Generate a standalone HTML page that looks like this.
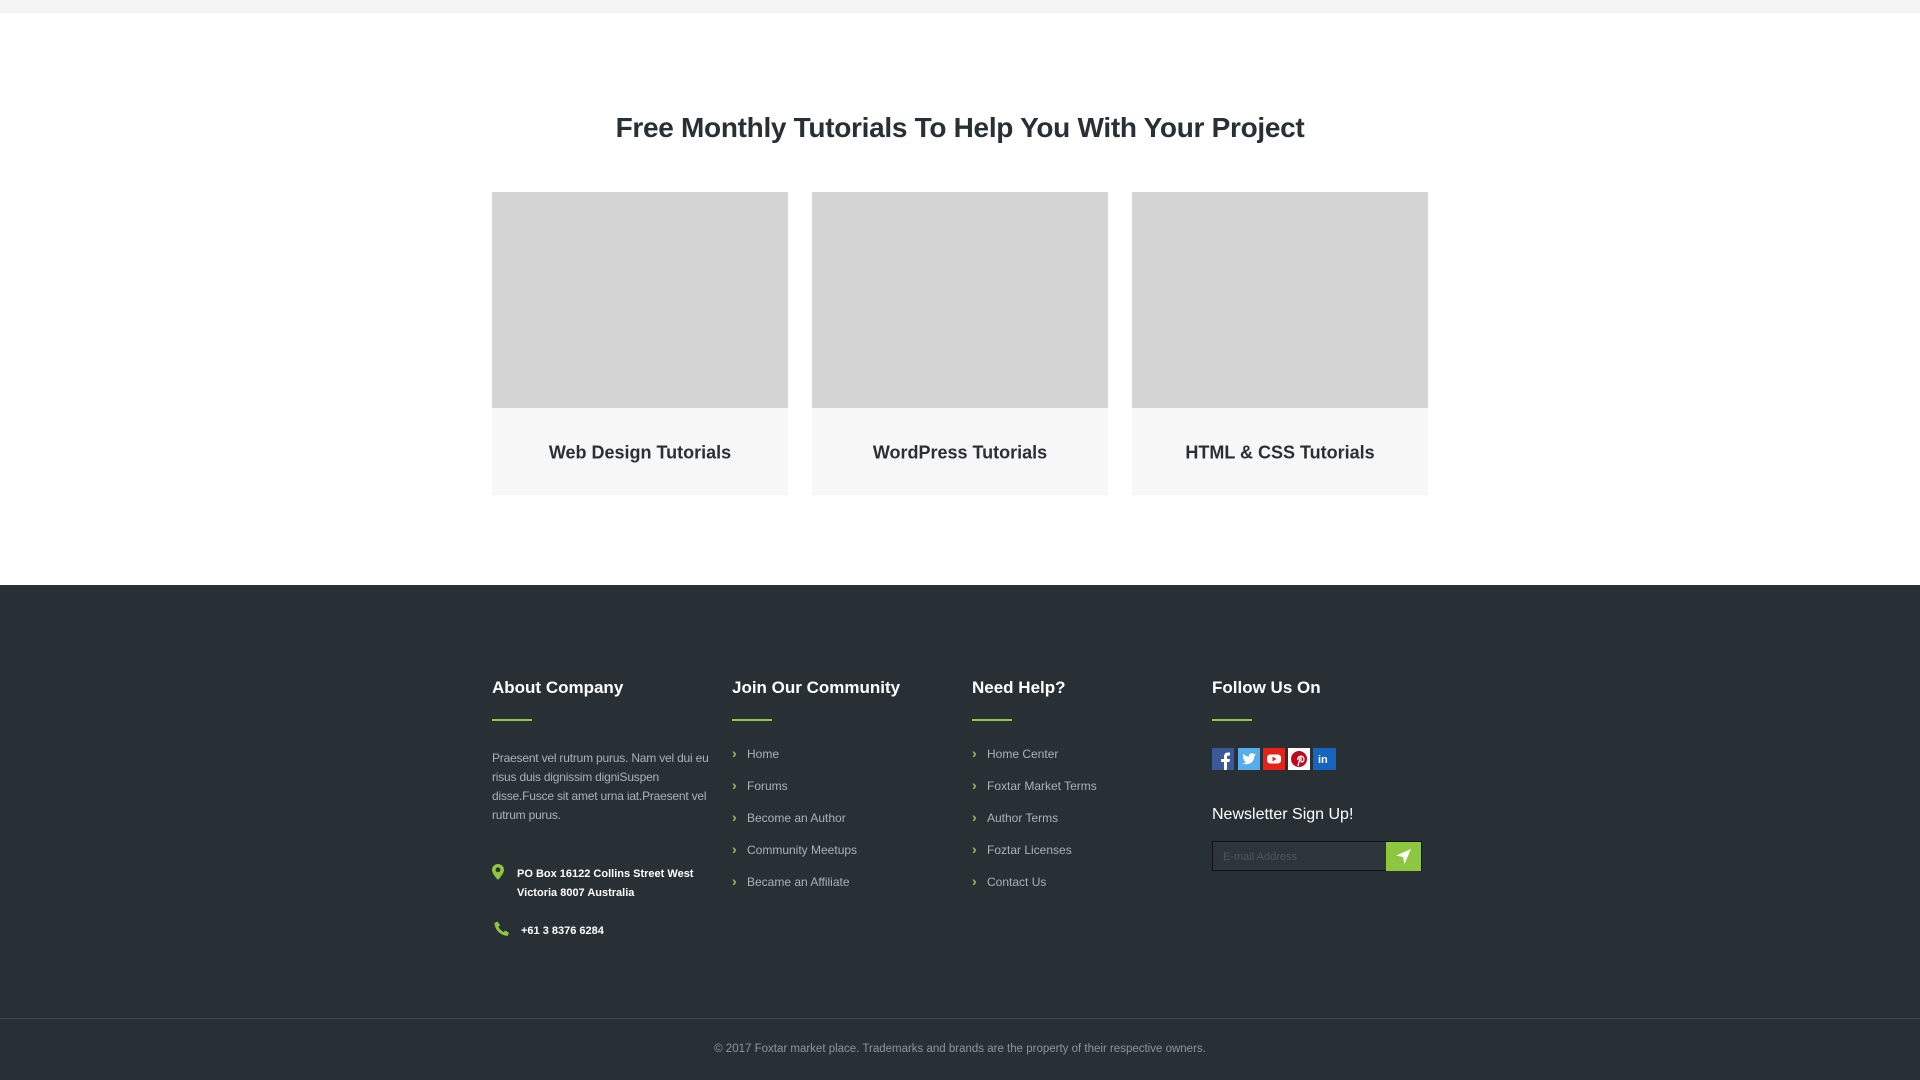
<!DOCTYPE html>
<html><head><meta charset="utf-8">
<style>
*{margin:0;padding:0;box-sizing:border-box}
body{width:1920px;height:1080px;background:#fff;font-family:"Liberation Sans",sans-serif;position:relative;overflow:hidden}
.abs{position:absolute}
.topbar{left:0;top:0;width:1920px;height:13px;background:#f4f5f4}
h1{position:absolute;left:0;width:1920px;top:112px;text-align:center;font-size:28px;font-weight:bold;color:#283035;letter-spacing:-0.3px}
.card{position:absolute;top:192px;width:296px;height:303px;background:#f7f7f7}
.card .img{height:216px;background:#d4d4d4}
.card .t{position:absolute;top:261px;left:0;width:100%;text-align:center;font-size:18px;font-weight:bold;color:#283035;transform:translateY(-50%)}
.footer{left:0;top:585px;width:1920px;height:495px;background:#283035}
.divider{left:0;top:1018px;width:1920px;height:1px;background:#3d474d}
.copy{left:0;width:1920px;top:1047px;text-align:center;font-size:11.5px;color:#8a959b}
.fh{position:absolute;top:678px;font-size:17px;font-weight:bold;color:#fff}
.gl{position:absolute;top:719px;width:40px;height:2px;background:#8dc63f}
.links{position:absolute;top:745px;list-style:none}
.links li{height:32px;font-size:12px;color:#a9b2b7;line-height:16px}
.links li:before{content:"›";color:#8dc63f;font-weight:bold;display:inline-block;width:15px;font-size:14px}
.para{left:492px;top:749px;width:218px;font-size:12px;letter-spacing:-0.2px;line-height:19px;color:#a9b2b7}
.addr{font-size:11px;font-weight:bold;color:#fff;line-height:19px}
.soc{position:absolute;top:748px;width:22px;height:22px}
</style></head><body>
<div class="abs topbar"></div>
<h1>Free Monthly Tutorials To Help You With Your Project</h1>
<div class="card" style="left:492px"><div class="img"></div><div class="t">Web Design Tutorials</div></div>
<div class="card" style="left:812px"><div class="img"></div><div class="t">WordPress Tutorials</div></div>
<div class="card" style="left:1132px"><div class="img"></div><div class="t">HTML &amp; CSS Tutorials</div></div>

<div class="abs footer"></div>
<div class="fh" style="left:492px">About Company</div>
<div class="fh" style="left:732px">Join Our Community</div>
<div class="fh" style="left:972px">Need Help?</div>
<div class="fh" style="left:1212px">Follow Us On</div>
<div class="gl" style="left:492px"></div>
<div class="gl" style="left:732px"></div>
<div class="gl" style="left:972px"></div>
<div class="gl" style="left:1212px"></div>

<div class="abs para">Praesent vel rutrum purus. Nam vel dui eu risus duis dignissim digniSuspen disse.Fusce sit amet urna iat.Praesent vel rutrum purus.</div>
<svg class="abs" style="left:492px;top:864px" width="12" height="16" viewBox="0 0 12 16"><path d="M6 0C2.7 0 0 2.6 0 5.8 0 10 6 16 6 16s6-6 6-10.2C12 2.6 9.300 0 6 0zm0 8.200a2.400 2.400 0 110-4.800 2.400 2.400 0 010 4.800z" fill="#8dc63f"/></svg>
<div class="abs addr" style="left:517px;top:865px">PO Box 16122 Collins Street West<br>Victoria 8007 Australia</div>
<svg class="abs" style="left:494px;top:921px" width="16" height="16" viewBox="0 0 16 16"><path d="M3.5 0.5l2.5 3.5-1.5 2c1 2 3 4 5 5l2-1.5 3.5 2.5-1.5 3C6 14 1 9 0.5 2z" fill="#8dc63f"/></svg>
<div class="abs addr" style="left:521px;top:922px">+61 3 8376 6284</div>

<ul class="links" style="left:732px"><li>Home</li><li>Forums</li><li>Become an Author</li><li>Community Meetups</li><li>Became an Affiliate</li></ul>
<ul class="links" style="left:972px"><li>Home Center</li><li>Foxtar Market Terms</li><li>Author Terms</li><li>Foztar Licenses</li><li>Contact Us</li></ul>

<svg class="soc" style="left:1212px" viewBox="0 0 22 22"><rect width="22" height="22" fill="#3b5998"/><path d="M12 22v-8h-3v-3h3V8.5c0-2.5 1.5-4 4-4h2v3h-1.5c-1 0-1.5.5-1.5 1.5V11h3l-.5 3H15v8z" fill="#fff"/></svg>
<svg class="soc" style="left:1238px" viewBox="0 0 22 22"><rect width="22" height="22" fill="#55acee"/><path d="M18 6.5c-.5.2-1 .4-1.6.4.6-.3 1-.9 1.2-1.5-.5.3-1.1.6-1.8.7a2.8 2.8 0 00-4.8 2.6C8.7 8.6 6.6 7.5 5.2 5.8c-.8 1.3-.3 2.9.9 3.7-.5 0-.9-.1-1.3-.3 0 1.4 1 2.6 2.3 2.8-.4.1-.9.1-1.3 0 .4 1.1 1.4 1.9 2.6 1.9A5.7 5.7 0 014 15c1.3.8 2.7 1.3 4.3 1.3 5.2 0 8.1-4.4 8-8.3.6-.4 1.1-.9 1.5-1.5z" fill="#fff"/></svg>
<svg class="soc" style="left:1263px" viewBox="0 0 22 22"><rect width="22" height="22" fill="#e62117"/><rect x="4" y="6.5" width="14" height="9" rx="3" fill="#fff"/><path d="M9.5 8.5v5l4-2.5z" fill="#e62117"/></svg>
<svg class="soc" style="left:1288px" viewBox="0 0 22 22"><rect width="22" height="22" fill="#fff"/><circle cx="11" cy="11" r="8" fill="#bd081c"/><path d="M10 18l1.5-6c-.3-.6-.2-2 .8-2.2 1.2-.2 1 1.5.6 2.7-.3 1.1.7 1.8 1.7 1.3 1.6-.9 1.9-4.3-.3-5.3-2.6-1.1-5.3.9-4.5 3.5" stroke="#fff" stroke-width="1.3" fill="none"/></svg>
<svg class="soc" style="left:1313px;width:23px" viewBox="0 0 23 22"><rect width="23" height="22" fill="#1565c0"/><text x="5" y="15" font-family="Liberation Sans" font-weight="bold" font-size="11" fill="#fff">in</text></svg>

<div class="abs" style="left:1212px;top:806px;font-size:16px;color:#fff">Newsletter Sign Up!</div>
<div class="abs" style="left:1212px;top:841px;width:210px;height:30px;background:#2d353c;border:1px solid #111"></div>
<div class="abs" style="left:1223px;top:851px;font-size:11px;color:#4c565d">E-mail Address</div>
<div class="abs" style="left:1386px;top:842px;width:35px;height:29px;background:#8dc63f"></div>
<svg class="abs" style="left:1395px;top:848px" width="17" height="17" viewBox="0 0 17 17"><path d="M16 1L1 7.5l7 1.5 1.5 7z" fill="#fff"/></svg>

<div class="abs divider"></div>
<div class="abs copy" style="top:1043px">© 2017 Foxtar market place. Trademarks and brands are the property of their respective owners.</div>
</body></html>
